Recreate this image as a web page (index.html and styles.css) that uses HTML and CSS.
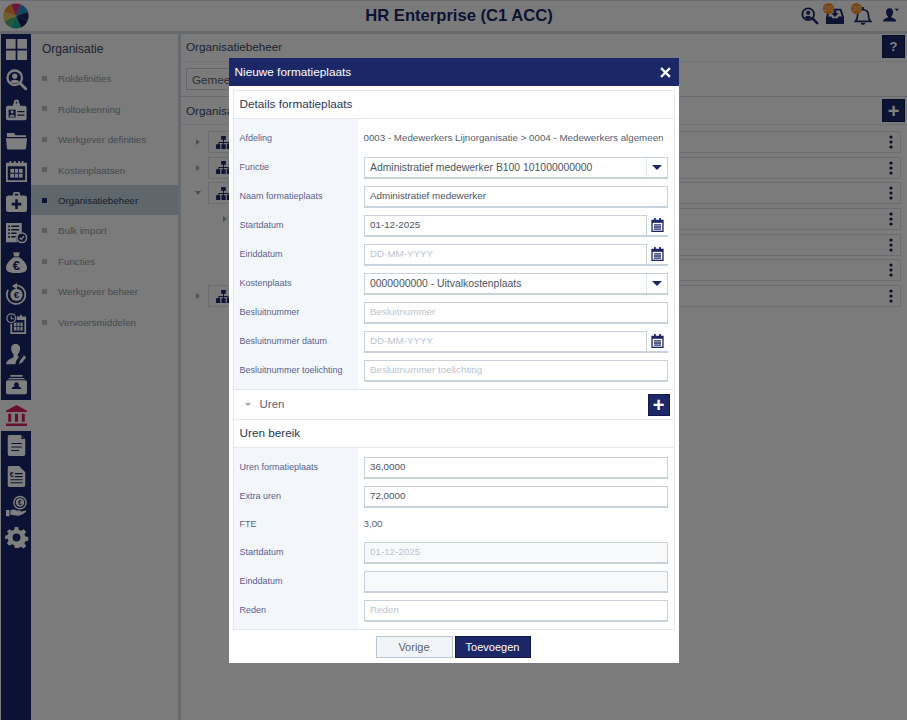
FILE: index.html
```html
<!DOCTYPE html>
<html lang="nl">
<head>
<meta charset="utf-8">
<title>HR Enterprise (C1 ACC)</title>
<link rel="stylesheet" href="styles.css">
</head>
<body>
<svg class="defs" width="0" height="0" aria-hidden="true">
  <defs>
    <symbol id="org" viewBox="0 0 16 14"><path d="M5.500 0h5v4h-5zM7.500 4h1v2.500h5V9h-1V7.500h-4V9h-1V7.500h-4V9h-1V6.500h5zM0 9h4.500v5H0zM5.800 9h4.500v5H5.800zM11.500 9H16v5h-4.500z"/></symbol>
    <symbol id="cal" viewBox="0 0 14 16"><path fill="#1b2766" d="M0 2h3V0h2v2h4V0h2v2h3v14H0z"/><path fill="#fff" d="M1.500 5.500h11v9h-11z"/><path fill="#1b2766" d="M3 7h8v1.500H3zM3 9.500h8V11H3zM3 12h8v1.300H3z"/></symbol>
    <symbol id="dots" viewBox="0 0 4 14"><circle cx="2" cy="2" r="1.600"/><circle cx="2" cy="7" r="1.600"/><circle cx="2" cy="12" r="1.600"/></symbol>
  </defs>
</svg>
<div class="app">
  <header class="topbar">
    <svg class="logo" viewBox="0 0 26 26">
      <path fill="#d62f6e" d="M13 13 8 1.500A12.500 12.500 0 0 1 18 1.500z"/>
      <path fill="#1f8fc4" d="M13 13 18 1.500A12.500 12.500 0 0 1 25 9z"/>
      <path fill="#1b2766" d="M13 13 25 9A12.500 12.500 0 0 1 24.500 18z"/>
      <path fill="#10184a" d="M13 13 24.500 18A12.500 12.500 0 0 1 18 24.500z"/>
      <path fill="#17a89a" d="M13 13 18 24.500A12.500 12.500 0 0 1 8 24.500z"/>
      <path fill="#4fae6a" d="M13 13 8 24.500A12.500 12.500 0 0 1 1.500 18z"/>
      <path fill="#e0bc58" d="M13 13 1.500 18A12.500 12.500 0 0 1 1 9z"/>
      <path fill="#e8872f" d="M13 13 1 9A12.500 12.500 0 0 1 8 1.500z"/>
    </svg>
    <h1 class="app-title">HR Enterprise (C1 ACC)</h1>
    <div class="top-icons">
      <svg class="top-icon search" viewBox="0 0 20 20"><circle cx="8" cy="8" r="6.500" fill="none" stroke="#1b2766" stroke-width="2"/><circle cx="8" cy="6.500" r="2.300" fill="#1b2766"/><path fill="#1b2766" d="M4 12c.5-2.500 7.500-2.500 8 0l-4 1.500z"/><path stroke="#1b2766" stroke-width="2.800" stroke-linecap="round" d="m13 13 5 5"/></svg>
      <span class="notif">
        <svg class="top-icon" viewBox="0 0 20 20"><path fill="#1b2766" d="M3 2h14l3 9v8H0v-8zM4.500 4 2.500 10.500H6l1 2h6l1-2h3.500L15.500 4z"/><path fill="#1b2766" d="M8.500 4h3v3h2.500L10 11 6 7h2.500z"/></svg>
        <span class="badge">20</span>
      </span>
      <span class="notif">
        <svg class="top-icon" viewBox="0 0 20 20"><path fill="none" stroke="#1b2766" stroke-width="1.800" d="M1.500 16c2.500-2 2.500-4 2.500-7 0-4 2.500-6 6-6s6 2 6 6c0 3 0 5 2.500 7z"/><path fill="#1b2766" d="M7.500 17.500h5c0 3-5 3-5 0zM9 0h2v3H9z"/></svg>
        <span class="badge">20</span>
      </span>
      <svg class="top-icon" viewBox="0 0 20 20"><path fill="#1b2766" d="M8.500 1.500c2.800 0 4 2 3.800 4.500-.2 2-1 3.400-1.800 4.200v1.600c2 .8 5 1.500 5.500 4.200H1c.5-2.700 3.500-3.400 5.500-4.200v-1.600C5.500 9.400 4.700 8 4.500 6c-.2-2.500 1.200-4.500 4-4.500z"/><path fill="#1b2766" d="M14 2h5l-2.500 2.500z"/></svg>
    </div>
  </header>
  <div class="main">
    <nav class="rail">
      <a class="rail-item"><svg viewBox="0 0 24 24" class="rail-icon"><path d="M0 0h11v11H0zM13 0h11v11H13zM0 13h11v11H0zM13 13h11v11H13z"/></svg></a>
      <a class="rail-item"><svg viewBox="0 0 24 24" class="rail-icon"><circle cx="10" cy="10" r="8.300" fill="none" stroke="#fff" stroke-width="2.600"/><circle cx="10" cy="8.200" r="3"/><path d="M5 15c.5-3.500 9.500-3.500 10 0l-5 1.500z"/><path stroke="#fff" stroke-width="3.400" stroke-linecap="round" fill="none" d="m16.500 16.500 6 6"/></svg></a>
      <a class="rail-item"><svg viewBox="0 0 24 24" class="rail-icon"><path d="M9 4V2.500a3 3 0 0 1 6 0V4h1v2.500h5a2.500 2.500 0 0 1 2.500 2.500v12a2 2 0 0 1-2 2H2a2 2 0 0 1-2-2V9a2.500 2.500 0 0 1 2.500-2.500h5.500V4z"/><path class="dk" d="M3 11h8v9H3z"/><circle cx="7" cy="13.800" r="1.700"/><path d="M4 19c0-3 6-3 6 0z"/><path class="dk" d="M13 12.500h8V14h-8zM13 16.500h8V18h-8z"/><circle class="dk" cx="12" cy="3" r="1"/></svg></a>
      <a class="rail-item"><svg viewBox="0 0 24 24" class="rail-icon"><path d="M1 3.500h8l2 2.500h12v2H1zM0 9.500h24l-1 11a2 2 0 0 1-2 1.800H3a2 2 0 0 1-2-1.800z"/></svg></a>
      <a class="rail-item"><svg viewBox="0 0 24 24" class="rail-icon"><path d="M0 2h4V0h2v2h3V0h2v2h3V0h2v2h2V0h2v2h4v22H0z"/><path class="dk" d="M2 6h20v16H2z"/><path d="M5 9h14v10H5z"/><path class="dk" d="M9.300 9h1v10h-1zM13.700 9h1v10h-1zM5 13.500h14v1H5z"/></svg></a>
      <a class="rail-item"><svg viewBox="0 0 24 24" class="rail-icon"><path d="M8 5V3a2 2 0 0 1 2-2h4a2 2 0 0 1 2 2v2h5a3 3 0 0 1 3 3v13a3 3 0 0 1-3 3H3a3 3 0 0 1-3-3V8a3 3 0 0 1 3-3zm2 0h4V3h-4z"/><path class="dk" d="M10.500 9.500h3v4h4v3h-4v4h-3v-4h-4v-3h4z"/></svg></a>
      <a class="rail-item"><svg viewBox="0 0 24 24" class="rail-icon"><path d="M0 1h18v11a7 7 0 0 0-5 11H0z"/><path class="dk" d="M2.500 4h2v2h-2zM6 4h9v1.600H6zM2.500 8h2v2h-2zM6 8h9v1.600H6zM2.500 12h2v2h-2zM6 12h6v1.600H6zM2.500 16h2v2h-2zM6 16h5v1.600H6z"/><circle cx="18" cy="18" r="5.500" fill="none" stroke="#fff" stroke-width="1.800"/><path fill="none" stroke="#fff" stroke-width="1.500" d="m15.500 18 2 2 3-4"/></svg></a>
      <a class="rail-item"><svg viewBox="0 0 24 24" class="rail-icon"><path d="M8 0c1.300.8 2.700.8 4 0 1.300.8 2.700.8 4 0l-1.500 5h-5zM9 6h6c4 2 9 8 9 12 0 4-3 6-12 6S0 22 0 18c0-4 5-10 9-12z"/><text class="rail-euro" x="12" y="21" text-anchor="middle">€</text></svg></a>
      <a class="rail-item"><svg viewBox="0 0 24 24" class="rail-icon"><path fill="none" stroke="#fff" stroke-width="2" d="M8 3.500A10.500 10.500 0 1 1 2.500 8"/><path d="M12.500 0v7.500L7 3.500z"/><circle cx="12" cy="13.500" r="7"/><text class="rail-euro small" x="12" y="17.500" text-anchor="middle">€</text></svg></a>
      <a class="rail-item"><svg viewBox="0 0 24 24" class="rail-icon"><path d="M5 4h3V2h2v2h6V2h2v2h5v20H5z"/><path class="dk" d="M7 8h14v14H7z"/><path d="M9 11h10v9H9z"/><path class="dk" d="M12 11h1v9h-1zM15.500 11h1v9h-1zM9 15h10v1H9z"/><circle class="dk" cx="6" cy="6" r="6.500"/><circle cx="6" cy="6" r="5" fill="none" stroke="#fff" stroke-width="1.500"/><path fill="none" stroke="#fff" stroke-width="1.200" d="M6 3v3.500h3"/></svg></a>
      <a class="rail-item"><svg viewBox="0 0 24 24" class="rail-icon"><path d="M11 0c4 0 5.500 3 5 6.500-.3 2.500-1.500 4-2.500 5v2.500c.5.300 1 .5 1.500.7l-3 3.800-1.500 4.500H0c.5-5 6-6.500 8.500-8v-3.500c-1-1-2.200-2.500-2.500-5C5.500 3 7 0 11 0z"/><path d="M14.500 23l1.500-4 4.500-6 2.500 2-4.500 6z"/></svg></a>
      <a class="rail-item"><svg viewBox="0 0 24 24" class="rail-icon"><path d="M5 1h14v2H5zM3 4.500h18V6H3zM2 7h20a2 2 0 0 1 2 2v12a2 2 0 0 1-2 2H2a2 2 0 0 1-2-2V9a2 2 0 0 1 2-2z"/><path class="dk" d="M12 9.500a2.800 2.800 0 0 1 2.300 4.400c1.500.5 3.200 1.300 3.200 3.100h-11c0-1.800 1.700-2.600 3.200-3.100A2.800 2.800 0 0 1 12 9.500z"/></svg></a>
      <a class="rail-item active"><svg viewBox="0 0 24 24" class="rail-icon bank"><path d="M12 0 24 6.500V8H0V6.500zM2.500 10h3.500v9H2.500zM10.200 10h3.600v9h-3.600zM18 10h3.500v9H18zM0 21h24v3H0z"/></svg></a>
      <a class="rail-item"><svg viewBox="0 0 24 24" class="rail-icon"><path d="M3.500 0H17l5 5v17a2 2 0 0 1-2 2H4a2 2 0 0 1-2-2V2a2 2 0 0 1 1.500-2z"/><path class="dk" d="M6 9h12v1.300H6zM6 13h12v1.300H6zM6 17h9v1.300H6zM17.500 1v3.500H21z"/></svg></a>
      <a class="rail-item"><svg viewBox="0 0 24 24" class="rail-icon"><path d="M3.500 0H15l7 7v15a2 2 0 0 1-2 2H4a2 2 0 0 1-2-2V2a2 2 0 0 1 1.500-2z"/><path class="dk" d="M10 8h9v1.300h-9zM10 11.500h9v1.300h-9zM5 15h14v1.300H5zM5 18.500h14v1.300H5z"/><text class="rail-euro tiny" x="6.500" y="12" text-anchor="middle">€</text></svg></a>
      <a class="rail-item"><svg viewBox="0 0 24 24" class="rail-icon"><circle cx="16" cy="7.500" r="7" fill="none" stroke="#fff" stroke-width="1.600"/><circle cx="16" cy="7.500" r="4.800"/><text class="rail-euro tiny" x="16" y="10.500" text-anchor="middle">€</text><path d="M0 16h4v7H0zM5 16.500c3-1.500 5-1 7 0h4c1 0 1.500 1 .5 1.500l6-1.500c1 0 1 1 .5 1.500-3 2.500-6 4-9 4.500-3 .3-6-1-9-1z"/></svg></a>
      <a class="rail-item"><svg viewBox="0 0 24 24" class="rail-icon"><path fill-rule="evenodd" d="M10 0h4l.7 3.300 2.600 1.100 2.900-1.900 2.800 2.800-1.900 2.900 1.100 2.600 3.300.7v4l-3.300.7-1.100 2.600 1.900 2.900-2.800 2.800-2.900-1.900-2.600 1.100L14 24h-4l-.7-3.300-2.600-1.100-2.900 1.900L1 18.700l1.900-2.900-1.100-2.600L-1 14v-4l2.800-.8 1.100-2.600L1 5.300l2.800-2.800 2.900 1.900 2.600-1.100zM12 7.500a4.500 4.500 0 1 0 0 9 4.500 4.500 0 0 0 0-9z"/></svg></a>
    </nav>
    <aside class="menu">
      <h2 class="menu-title">Organisatie</h2>
      <ul class="menu-list">
        <li class="menu-item">Roldefinities</li>
        <li class="menu-item">Roltoekenning</li>
        <li class="menu-item">Werkgever definities</li>
        <li class="menu-item">Kostenplaatsen</li>
        <li class="menu-item current">Organisatiebeheer</li>
        <li class="menu-item">Bulk import</li>
        <li class="menu-item">Functies</li>
        <li class="menu-item">Werkgever beheer</li>
        <li class="menu-item">Vervoersmiddelen</li>
      </ul>
    </aside>
    <section class="content">
      <div class="content-head">
        <span class="content-title">Organisatiebeheer</span>
        <button class="square-btn help">?</button>
      </div>
      <div class="filter-row"><span class="filter-box">Gemeente</span></div>
      <div class="tree-head">
        <span class="content-title">Organisatie</span>
        <button class="square-btn plus">+</button>
      </div>
      <div class="tree">
        <div class="tree-row"><span class="tree-caret"></span><div class="tree-box"><svg class="org-icon"><use href="#org"/></svg><svg class="dots-icon"><use href="#dots"/></svg></div></div>
        <div class="tree-row"><span class="tree-caret"></span><div class="tree-box"><svg class="org-icon"><use href="#org"/></svg><svg class="dots-icon"><use href="#dots"/></svg></div></div>
        <div class="tree-row"><span class="tree-caret open"></span><div class="tree-box"><svg class="org-icon"><use href="#org"/></svg><svg class="dots-icon"><use href="#dots"/></svg></div></div>
        <div class="tree-row child"><span class="tree-caret"></span><div class="tree-box"><svg class="dots-icon"><use href="#dots"/></svg></div></div>
        <div class="tree-row child"><span class="tree-caret hidden"></span><div class="tree-box"><svg class="dots-icon"><use href="#dots"/></svg></div></div>
        <div class="tree-row child"><span class="tree-caret hidden"></span><div class="tree-box"><svg class="dots-icon"><use href="#dots"/></svg></div></div>
        <div class="tree-row"><span class="tree-caret"></span><div class="tree-box"><svg class="org-icon"><use href="#org"/></svg><svg class="dots-icon"><use href="#dots"/></svg></div></div>
      </div>
    </section>
  </div>
</div>

<div class="overlay">
  <div class="modal">
    <div class="modal-head">
      <span class="modal-title">Nieuwe formatieplaats</span>
      <svg class="modal-close" viewBox="0 0 12 12"><path fill="none" stroke="#fff" stroke-width="2.400" d="m1.200 1.200 9.600 9.600M10.800 1.200l-9.600 9.600"/></svg>
    </div>
    <div class="panel">
      <div class="panel-title first">Details formatieplaats</div>
      <div class="form">
        <div class="row"><div class="label">Afdeling</div><div class="value text">0003 - Medewerkers Lijnorganisatie &gt; 0004 - Medewerkers algemeen</div></div>
        <div class="row"><div class="label">Functie</div><div class="value"><div class="field select"><span class="field-main">Administratief medewerker B100 101000000000</span><span class="addon"><span class="arrow"></span></span></div></div></div>
        <div class="row"><div class="label">Naam formatieplaats</div><div class="value"><div class="field"><span class="field-main">Administratief medewerker</span></div></div></div>
        <div class="row"><div class="label">Startdatum</div><div class="value"><div class="field date"><span class="field-main">01-12-2025</span><span class="addon"><svg class="cal-icon"><use href="#cal"/></svg></span></div></div></div>
        <div class="row"><div class="label">Einddatum</div><div class="value"><div class="field date"><span class="field-main ph">DD-MM-YYYY</span><span class="addon"><svg class="cal-icon"><use href="#cal"/></svg></span></div></div></div>
        <div class="row"><div class="label">Kostenplaats</div><div class="value"><div class="field select"><span class="field-main">0000000000 - Uitvalkostenplaats</span><span class="addon"><span class="arrow"></span></span></div></div></div>
        <div class="row"><div class="label">Besluitnummer</div><div class="value"><div class="field"><span class="field-main ph">Besluitnummer</span></div></div></div>
        <div class="row"><div class="label">Besluitnummer datum</div><div class="value"><div class="field date"><span class="field-main ph">DD-MM-YYYY</span><span class="addon"><svg class="cal-icon"><use href="#cal"/></svg></span></div></div></div>
        <div class="row"><div class="label">Besluitnummer toelichting</div><div class="value"><div class="field"><span class="field-main ph">Besluitnummer toelichting</span></div></div></div>
      </div>
      <div class="uren-row">
        <span class="uren-caret"></span><span class="uren-label">Uren</span>
        <button class="square-btn plus small">+</button>
      </div>
      <div class="panel-title">Uren bereik</div>
      <div class="form second">
        <div class="row"><div class="label">Uren formatieplaats</div><div class="value"><div class="field"><span class="field-main">36,0000</span></div></div></div>
        <div class="row"><div class="label">Extra uren</div><div class="value"><div class="field"><span class="field-main">72,0000</span></div></div></div>
        <div class="row short"><div class="label">FTE</div><div class="value text">3,00</div></div>
        <div class="row"><div class="label">Startdatum</div><div class="value"><div class="field disabled"><span class="field-main ph">01-12-2025</span></div></div></div>
        <div class="row"><div class="label">Einddatum</div><div class="value"><div class="field disabled"><span class="field-main"></span></div></div></div>
        <div class="row"><div class="label">Reden</div><div class="value"><div class="field"><span class="field-main ph">Reden</span></div></div></div>
      </div>
    </div>
    <div class="modal-foot">
      <button class="btn secondary">Vorige</button>
      <button class="btn primary">Toevoegen</button>
    </div>
  </div>
</div>
</body>
</html>
```
FILE: styles.css
```css
* { box-sizing: border-box; }
html, body { margin: 0; height: 100%; overflow: hidden; }
body { font-family: "Liberation Sans", Arial, sans-serif; color: #3f4a5a; background: #f6f6f6; }
.defs { position: absolute; }
button { font-family: inherit; cursor: pointer; }

.app { display: flex; flex-direction: column; height: 720px; }
.topbar { height: 34px; flex: none; display: grid; grid-template-columns: 1fr auto 1fr; align-items: center; padding-left: 3px; background: #f6f6f6; border-top: 1px solid #d2d8e0; border-bottom: 3px solid #ccd3dc; }
.logo { width: 26px; height: 26px; }
.app-title { margin: 0 0 0 8px; font-size: 16.600px; font-weight: 700; color: #1b2766; white-space: nowrap; }
.top-icons { display: flex; align-items: center; justify-self: end; gap: 10px; padding-right: 7px; }
.top-icon { width: 18px; height: 18px; display: block; }
.top-icon.search { margin-right: -3px; }
.notif { position: relative; display: block; }
.badge { position: absolute; left: -3px; top: -4px; width: 11px; height: 11px; border-radius: 50%; background: #f08a1d; color: #f9d9a8; font-size: 8px; line-height: 11px; text-align: center; }

.main { flex: 1; display: flex; min-height: 0; padding-left: 1px; }
.rail { width: 30px; flex: none; background: #182468; }
.rail-item { display: flex; height: 30.500px; align-items: center; justify-content: center; }
.rail-icon { width: 21px; height: 21px; fill: #fff; display: block; overflow: visible; }
.rail-icon .dk { fill: #182468; }
.rail-item.active { background: #f6f6f6; }
.rail-icon.bank { fill: #d01f5f; }
.rail-euro { fill: #182468; font-size: 15px; font-family: "Liberation Sans", sans-serif; font-weight: 700; }
.rail-euro.small { font-size: 11px; }
.rail-euro.tiny { font-size: 8px; }

.menu { width: 147px; flex: none; }
.menu-title { margin: 0; padding: 8px 0 0 11px; height: 29px; font-size: 12px; font-weight: 400; color: #3a4660; }
.menu-list { list-style: none; margin: 0; padding: 0; }
.menu-item { height: 30.450px; display: flex; align-items: center; padding: 1px 0 0 27px; font-size: 9.750px; color: #8b95a0; position: relative; }
.menu-item::before { content: ""; position: absolute; left: 11px; top: 13px; width: 5px; height: 5px; background: #b5bcc4; }
.menu-item.current { background: #bfcdd8; color: #33405a; }
.menu-item.current::before { background: #1b2766; }

.content { flex: 1; min-width: 0; border-left: 3px solid #ccd3dc; display: flex; flex-direction: column; }
.content-head { height: 28px; display: flex; align-items: center; justify-content: space-between; padding: 0 2px 2px 5px; border-bottom: 1px solid #dfe3e8; }
.content-title { font-size: 11.700px; color: #3a4660; }
.square-btn { width: 23px; height: 23px; padding: 0; border: 1px solid #10184a; background: #1b2766; color: #fff; font-weight: 700; display: flex; align-items: center; justify-content: center; flex: none; }
.help { font-size: 13px; }
.plus { font-size: 20px; line-height: 20px; }
.filter-row { height: 35px; padding: 6px 0 0 5px; border-bottom: 1px solid #c9d2dc; }
.filter-box { display: flex; align-items: center; width: 120px; height: 22px; padding-left: 5px; font-size: 11.700px; border: 1px solid #c6ced8; color: #56606e; }
.tree-head { height: 28px; display: flex; align-items: center; justify-content: space-between; padding: 0 2px 0 5px; border-bottom: 1px solid #dfe3e8; }
.tree { padding: 6px 6px 0 0; display: flex; flex-direction: column; gap: 3.700px; }
.tree-row { display: flex; align-items: center; height: 22px; padding-left: 15px; }
.tree-caret { width: 0; height: 0; border-style: solid; border-width: 3.500px 0 3.500px 4px; border-color: transparent transparent transparent #9aa2ac; flex: none; margin-right: 8px; }
.tree-caret.open { border-width: 4px 3px 0; border-color: #9aa2ac transparent transparent; margin-left: -1px; margin-right: 7px; }
.tree-caret.hidden { visibility: hidden; }
.tree-row.child { padding-left: 42px; }
.tree-box { flex: 1; height: 22px; border: 1px solid #d6dbe2; display: flex; align-items: center; justify-content: space-between; padding: 0 7px 0 7px; }
.tree-row.child .tree-box { justify-content: flex-end; }
.org-icon { width: 15px; height: 13px; fill: #1b2766; }
.dots-icon { width: 4px; height: 14px; fill: #10184a; }

.overlay { position: fixed; inset: 0; background: rgba(0, 0, 0, .5); display: flex; justify-content: center; align-items: flex-start; padding-top: 58px; }
.modal { width: 450px; height: 605px; background: #fff; display: flex; flex-direction: column; }
.modal-head { height: 28px; flex: none; background: #1b2766; color: #fff; display: flex; align-items: center; justify-content: space-between; padding: 0 8px 0 6px; }
.modal-title { font-size: 11.800px; }
.modal-close { width: 11px; height: 11px; display: block; }
.panel { margin: 4px 4px 0; border: 1px solid #e1e8ef; height: 540px; flex: none; display: flex; flex-direction: column; }
.panel-title { height: 28px; flex: none; display: flex; align-items: center; padding: 0 0 2px 6px; font-size: 11.750px; color: #2b3757; border-bottom: 1px solid #e1e8ef; }
.form { display: flex; flex-direction: column; background: linear-gradient(90deg, #f3f7fc 124px, #fff 124px); padding: 5px 0 4px; flex: none; }
.form.second { padding: 5px 0 0; flex: 1; }
.row { display: flex; height: 29px; align-items: center; }
.row.short { height: 27px; }
.label { width: 124px; flex: none; padding: 0 0 2px 6px; font-size: 9px; color: #5a5f8f; }
.value { flex: 1; min-width: 0; padding: 0 6px; }
.value.text { padding-bottom: 2px; font-size: 9.750px; color: #56606e; white-space: nowrap; }
.field { display: flex; height: 22px; border: 1px solid #c8d2dd; border-bottom-width: 2px; background: #fff; }
.field-main { flex: 1; min-width: 0; padding-left: 5.500px; font-size: 9.800px; line-height: 18px; color: #4b5563; white-space: nowrap; }
.field.select .field-main { font-size: 10.400px; line-height: 19px; }
.field-main.ph { color: #bcc5cf; }
.field.disabled { background: #f7f9fb; }
.addon { flex: none; width: 21px; display: flex; align-items: center; justify-content: center; border-left: 1px solid #e1e6ec; }
.arrow { width: 0; height: 0; border-style: solid; border-width: 5px 5.500px 0; border-color: #1b2766 transparent transparent; }
.field.date { border-top: 0; border-right: 0; border-left: 0; }
.field.date .field-main { border: 1px solid #c8d2dd; border-bottom: 0; }
.field.date .addon { border-left: 0; }
.cal-icon { width: 13px; height: 14px; display: block; }

.uren-row { height: 31px; flex: none; display: flex; align-items: center; padding: 0 4px 0 11px; border-top: 1px solid #e1e8ef; border-bottom: 1px solid #e1e8ef; }
.uren-caret { width: 0; height: 0; border-style: solid; border-width: 3px 3px 0; border-color: #9aa2ac transparent transparent; margin-right: 9px; }
.uren-label { flex: 1; padding-bottom: 2px; font-size: 11.500px; color: #5b6472; }
.square-btn.small { width: 22px; height: 22px; }
.modal-foot { flex: 1; display: flex; gap: 2px; padding: 6px 0 0 147px; }
.btn { height: 22px; font-size: 11px; padding: 0; }
.btn.secondary { width: 77px; background: #f0f4f8; border: 1px solid #b9c6d6; color: #56606e; }
.btn.primary { width: 76px; background: #1b2766; border: 1px solid #10184a; color: #fff; }
```
